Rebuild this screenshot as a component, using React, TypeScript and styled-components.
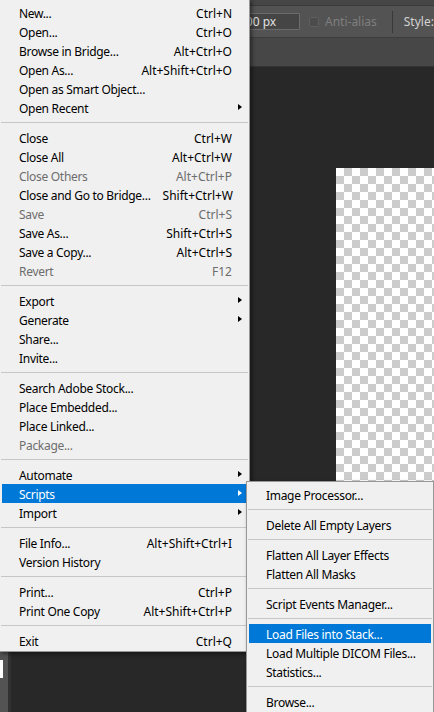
import React from 'react'
import styled, { createGlobalStyle } from 'styled-components'

const GlobalStyle = createGlobalStyle`
  html, body {
    margin: 0;
    padding: 0;
    background: #282828;
  }
  * {
    box-sizing: border-box;
  }
`

const UI_FONT = `"Noto Sans", "Open Sans", Arial, sans-serif`

type Item =
  | { sep: true }
  | {
      sep?: false
      label: string
      shortcut?: string
      disabled?: boolean
      sub?: boolean
      active?: boolean
    }

const fileMenu: Item[] = [
  { label: 'New...', shortcut: 'Ctrl+N' },
  { label: 'Open...', shortcut: 'Ctrl+O' },
  { label: 'Browse in Bridge...', shortcut: 'Alt+Ctrl+O' },
  { label: 'Open As...', shortcut: 'Alt+Shift+Ctrl+O' },
  { label: 'Open as Smart Object...' },
  { label: 'Open Recent', sub: true },
  { sep: true },
  { label: 'Close', shortcut: 'Ctrl+W' },
  { label: 'Close All', shortcut: 'Alt+Ctrl+W' },
  { label: 'Close Others', shortcut: 'Alt+Ctrl+P', disabled: true },
  { label: 'Close and Go to Bridge...', shortcut: 'Shift+Ctrl+W' },
  { label: 'Save', shortcut: 'Ctrl+S', disabled: true },
  { label: 'Save As...', shortcut: 'Shift+Ctrl+S' },
  { label: 'Save a Copy...', shortcut: 'Alt+Ctrl+S' },
  { label: 'Revert', shortcut: 'F12', disabled: true },
  { sep: true },
  { label: 'Export', sub: true },
  { label: 'Generate', sub: true },
  { label: 'Share...' },
  { label: 'Invite...' },
  { sep: true },
  { label: 'Search Adobe Stock...' },
  { label: 'Place Embedded...' },
  { label: 'Place Linked...' },
  { label: 'Package...', disabled: true },
  { sep: true },
  { label: 'Automate', sub: true },
  { label: 'Scripts', sub: true, active: true },
  { label: 'Import', sub: true },
  { sep: true },
  { label: 'File Info...', shortcut: 'Alt+Shift+Ctrl+I' },
  { label: 'Version History' },
  { sep: true },
  { label: 'Print...', shortcut: 'Ctrl+P' },
  { label: 'Print One Copy', shortcut: 'Alt+Shift+Ctrl+P' },
  { sep: true },
  { label: 'Exit', shortcut: 'Ctrl+Q' },
]

const scriptsMenu: Item[] = [
  { label: 'Image Processor...' },
  { sep: true },
  { label: 'Delete All Empty Layers' },
  { sep: true },
  { label: 'Flatten All Layer Effects' },
  { label: 'Flatten All Masks' },
  { sep: true },
  { label: 'Script Events Manager...' },
  { sep: true },
  { label: 'Load Files into Stack...', active: true },
  { label: 'Load Multiple DICOM Files...' },
  { label: 'Statistics...' },
  { sep: true },
  { label: 'Browse...' },
]

const Screen = styled.div`
  position: relative;
  width: 434px;
  height: 712px;
  overflow: hidden;
  display: flex;
  flex-direction: column;
  background: #282828;
  font-family: ${UI_FONT};
  font-size: 12px;
`

const TitleStrip = styled.div`
  height: 6px;
  background: #464646;
  border-bottom: 1px solid #3a3a3a;
`

const OptionsBar = styled.div`
  height: 32px;
  display: flex;
  align-items: center;
  padding-left: 230px;
  background: #535353;
  border-bottom: 1px solid #3c3c3c;
  color: #d6d6d6;
  white-space: nowrap;
`

const FieldBox = styled.div<{ $w: number; $h: number; $round?: boolean }>`
  width: ${({ $w }) => $w}px;
  height: ${({ $h }) => $h}px;
  flex: none;
  display: flex;
  align-items: center;
  padding-left: 8px;
  margin-left: ${({ $round }) => ($round ? 5 : 0)}px;
  background: #454545;
  border: 1px solid #6b6b6b;
  border-radius: ${({ $round }) => ($round ? 4 : 1)}px;
  color: #e0e0e0;
`

const CheckBox = styled.span`
  width: 10px;
  height: 10px;
  flex: none;
  margin-left: 9px;
  border: 1px solid #5f5f5f;
  border-radius: 2px;
  background: #4c4c4c;
`

const OptionLabel = styled.span<{ $dim?: boolean }>`
  margin-left: ${({ $dim }) => ($dim ? 6 : 11)}px;
  color: ${({ $dim }) => ($dim ? '#7e7e7e' : '#d2d2d2')};
`

const BarDivider = styled.span`
  width: 1px;
  height: 22px;
  flex: none;
  margin-left: 15px;
  background: #383838;
`

const TabBar = styled.div`
  height: 29px;
  background: #474747;
  border-bottom: 1px solid #333333;
`

const Workspace = styled.div`
  flex: 1;
  display: flex;
  min-height: 0;
`

const ToolsPanel = styled.div`
  width: 11px;
  flex: none;
  padding-top: 593px;
  background: #535353;
  border-right: 3px solid #323232;
`

const Swatch = styled.div`
  width: 3px;
  height: 18px;
  background: #ffffff;
`

const CanvasArea = styled.div`
  flex: 1;
  display: flex;
  padding: 101px 0 0 325px;
  background: #282828;
`

const Transparency = styled.div`
  flex: 1;
  background: repeating-conic-gradient(#cccccc 0 25%, #ffffff 0 50%) 0 0 / 16px 16px;
`

const Menu = styled.div<{ $x: number; $y: number; $w: number }>`
  position: absolute;
  left: ${({ $x }) => $x}px;
  top: ${({ $y }) => $y}px;
  width: ${({ $w }) => $w}px;
  padding: 3px 0 1px;
  background: #f0f0f0;
  border: 1px solid #979797;
  box-shadow: 2px 2px 4px rgba(0, 0, 0, 0.45);
  font-family: ${UI_FONT};
  font-size: 12px;
  white-space: nowrap;
`

const Row = styled.div<{ $active?: boolean; $disabled?: boolean }>`
  position: relative;
  height: 19px;
  margin: 0 2px;
  display: flex;
  align-items: center;
  padding: 1px 15px 0 17px;
  background: ${({ $active }) => ($active ? '#0078d7' : 'transparent')};
  color: ${({ $active, $disabled }) =>
    $active ? '#ffffff' : $disabled ? '#6d6d6d' : '#000000'};
`

const Label = styled.span`
  flex: 1;
  letter-spacing: -0.3px;
`

const Shortcut = styled.span`
  margin-left: 12px;
`

const Arrow = styled.span<{ $active?: boolean }>`
  position: absolute;
  right: 5px;
  top: 6px;
  width: 0;
  height: 0;
  border-left: 4px solid ${({ $active }) => ($active ? '#ffffff' : '#000000')};
  border-top: 3.5px solid transparent;
  border-bottom: 3.5px solid transparent;
`

const Separator = styled.div`
  height: 11px;
  display: flex;
  align-items: center;
  margin: 0 1px;

  &::after {
    content: '';
    flex: 1;
    height: 1px;
    background: #c6c6c6;
  }
`

function MenuList({ items }: { items: Item[] }) {
  return (
    <>
      {items.map((it, i) =>
        it.sep ? (
          <Separator key={i} />
        ) : (
          <Row key={i} $active={it.active} $disabled={it.disabled}>
            <Label>{it.label}</Label>
            {it.shortcut && <Shortcut>{it.shortcut}</Shortcut>}
            {it.sub && <Arrow $active={it.active} />}
          </Row>
        )
      )}
    </>
  )
}

export default function App() {
  return (
    <Screen>
      <GlobalStyle />
      <TitleStrip />
      <OptionsBar>
        <FieldBox $w={70} $h={17}>100 px</FieldBox>
        <CheckBox />
        <OptionLabel $dim>Anti-alias</OptionLabel>
        <BarDivider />
        <OptionLabel>Style:</OptionLabel>
        <FieldBox $w={14} $h={20} $round>
          N
        </FieldBox>
      </OptionsBar>
      <TabBar />
      <Workspace>
        <ToolsPanel>
          <Swatch />
        </ToolsPanel>
        <CanvasArea>
          <Transparency />
        </CanvasArea>
      </Workspace>

      <Menu $x={-1} $y={-1} $w={251}>
        <MenuList items={fileMenu} />
      </Menu>
      <Menu $x={246} $y={481} $w={188}>
        <MenuList items={scriptsMenu} />
      </Menu>
    </Screen>
  )
}
